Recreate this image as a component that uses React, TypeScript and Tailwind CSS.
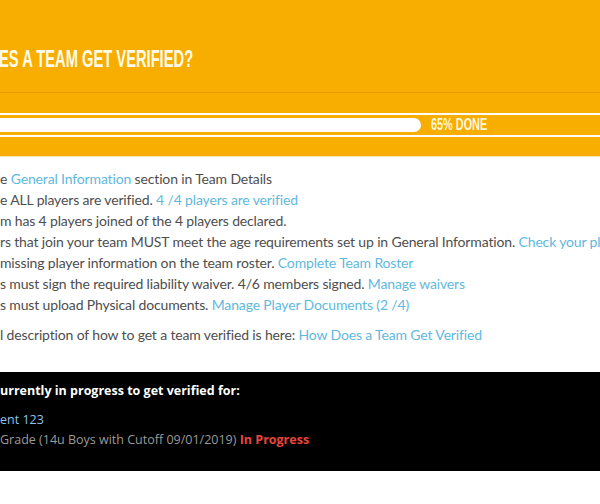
const steps = [
  { text: 'e ', link: 'General Information', after: ' section in Team Details' },
  { text: 'e ALL players are verified. ', link: '4 /4 players are verified' },
  { text: 'm has 4 players joined of the 4 players declared.' },
  {
    text: 'rs that join your team MUST meet the age requirements set up in General Information. ',
    link: 'Check your players',
  },
  { text: 'missing player information on the team roster. ', link: 'Complete Team Roster' },
  { text: 's must sign the required liability waiver. 4/6 members signed. ', link: 'Manage waivers' },
  { text: 's must upload Physical documents.  ', link: 'Manage Player Documents (2 /4)' },
];

const condensed = { fontFamily: '"Liberation Sans", Arial, sans-serif' };

export default function App() {
  return (
    <div className="w-[600px] h-[504px] overflow-hidden bg-white">
      {/* header */}
      <div className="bg-[#f7ae00] h-[157px] border-b border-[#fbe7b0]">
        <div className="h-[93px] border-b border-[#e39c00] pt-[44px] whitespace-nowrap">
          <h1
            className="inline-block origin-left scale-x-[0.6] text-[24.5px] leading-[30px] font-bold text-[#fffbea] ml-[-1px]"
            style={condensed}
          >
            ES A TEAM GET VERIFIED?
          </h1>
        </div>
        <div className="mt-[20px] h-[24px] border-y-2 border-white flex items-center whitespace-nowrap">
          <div className="w-[421px] h-[14px] bg-white rounded-r-full shrink-0" />
          <span
            className="inline-block origin-left scale-x-[0.68] ml-[10px] text-[16px] leading-none font-bold text-[#fff7dc]"
            style={condensed}
          >
            65% DONE
          </span>
        </div>
      </div>

      {/* steps */}
      <div
        className="pt-[11px] text-[14px] leading-[21px] tracking-[-0.15px] text-[#4e4e4e] whitespace-nowrap"
        style={{ fontFamily: 'Lato, "Noto Sans", sans-serif' }}
      >
        {steps.map((s, i) => (
          <div key={i}>
            {s.text}
            {s.link && <a className="text-[#5fb9dd]">{s.link}</a>}
            {s.after}
          </div>
        ))}
        <div className="mt-[9px]">
          l description of how to get a team verified is here:{' '}
          <a className="text-[#5fb9dd]">How Does a Team Get Verified</a>
        </div>
      </div>

      {/* in progress */}
      <div
        className="mt-[27px] bg-black h-[99px] pt-[8px] text-[12.5px] whitespace-nowrap"
        style={{ fontFamily: '"Open Sans", "Noto Sans", sans-serif' }}
      >
        <div className="font-bold text-white leading-[22px]">urrently in progress to get verified for:</div>
        <div className="mt-[8px] text-[#8cc4ec] leading-[20px]">ent 123</div>
        <div className="text-[#9a9a9a] leading-[20px]">
          Grade (14u Boys with Cutoff 09/01/2019) <span className="font-bold text-[#e8453c]">In Progress</span>
        </div>
      </div>
    </div>
  );
}
